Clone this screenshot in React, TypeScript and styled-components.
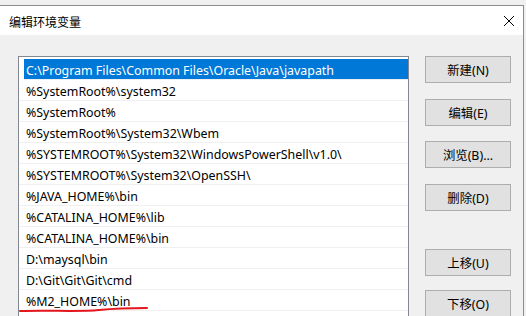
import React from "react";
import styled, { createGlobalStyle } from "styled-components";

const GlobalStyle = createGlobalStyle`
  html, body {
    margin: 0;
    padding: 0;
    background: #f0f0f0;
    overflow: hidden;
  }
  body {
    font-family: "Noto Sans", "Noto Sans CJK SC", sans-serif;
    font-size: 12.4px;
    color: #000;
  }
`;

const Window = styled.div`
  margin-top: 5px;
  margin-left: -1px;
  width: 523px;
  height: 320px;
  border: 1px solid #8c8c8c;
  background: #f0f0f0;
  display: flex;
  flex-direction: column;
`;

const TitleBar = styled.div`
  height: 29px;
  background: #fff;
  display: flex;
  align-items: center;
  justify-content: space-between;
  padding: 0 8px 0 9px;
  flex-shrink: 0;
`;

const Title = styled.span`
  font-family: "Noto Sans CJK SC", sans-serif;
  font-size: 12px;
  margin-top: 1px;
`;

const CloseIcon = styled.svg`
  width: 12px;
  height: 12px;
  margin-top: 1px;
`;

const Body = styled.div`
  display: flex;
  gap: 16px;
  padding: 21px 0 0 18px;
`;

const ListBox = styled.div`
  position: relative;
  width: 389px;
  height: 280px;
  border: 1px solid #828790;
  background: #fff;
  padding-top: 2px;
  flex-shrink: 0;
`;

const Row = styled.div<{ $selected?: boolean }>`
  box-sizing: border-box;
  height: 21px;
  padding-top: 2px;
  border-bottom: 1px solid #efefef;
  margin-left: ${(p) => (p.$selected ? "5px" : "0")};
  padding-left: ${(p) => (p.$selected ? "2px" : "7px")};
  background: ${(p) => (p.$selected ? "#0078d7" : "transparent")};
  color: ${(p) => (p.$selected ? "#fff" : "#000")};
  display: flex;
  align-items: center;
  white-space: nowrap;
`;

const Underline = styled.svg`
  position: absolute;
  left: 0;
  top: 247px;
  width: 140px;
  height: 10px;
  pointer-events: none;
`;

const ButtonColumn = styled.div`
  display: flex;
  flex-direction: column;
`;

const Button = styled.button<{ $gap: number }>`
  width: 86px;
  height: 27px;
  margin-top: ${(p) => p.$gap}px;
  border: 1px solid #adadad;
  background: #e1e1e1;
  font-family: "Noto Sans", "Noto Sans CJK SC", sans-serif;
  font-size: 12.4px;
  color: #000;
  padding: 1px 0 0;
  display: flex;
  align-items: center;
  justify-content: center;
`;

const paths = [
  "C:\\Program Files\\Common Files\\Oracle\\Java\\javapath",
  "%SystemRoot%\\system32",
  "%SystemRoot%",
  "%SystemRoot%\\System32\\Wbem",
  "%SYSTEMROOT%\\System32\\WindowsPowerShell\\v1.0\\",
  "%SYSTEMROOT%\\System32\\OpenSSH\\",
  "%JAVA_HOME%\\bin",
  "%CATALINA_HOME%\\lib",
  "%CATALINA_HOME%\\bin",
  "D:\\maysql\\bin",
  "D:\\Git\\Git\\Git\\cmd",
  "%M2_HOME%\\bin",
  "",
];

const buttons = [
  { label: "新建(N)", gap: 0 },
  { label: "编辑(E)", gap: 16 },
  { label: "浏览(B)...", gap: 15 },
  { label: "删除(D)", gap: 16 },
  { label: "上移(U)", gap: 38 },
  { label: "下移(O)", gap: 14 },
];

export default function App() {
  return (
    <>
      <GlobalStyle />
      <Window>
        <TitleBar>
          <Title>编辑环境变量</Title>
          <CloseIcon viewBox="0 0 12 12">
            <path d="M1 1 L11 11 M11 1 L1 11" stroke="#000" strokeWidth="1" />
          </CloseIcon>
        </TitleBar>
        <Body>
          <ListBox>
            {paths.map((p, i) => (
              <Row key={i} $selected={i === 0}>
                {p}
              </Row>
            ))}
            <Underline viewBox="0 0 140 10">
              <path
                d="M1 7 C 30 6, 60 8, 80 6 S 120 4, 128 4"
                fill="none"
                stroke="#e3161d"
                strokeWidth="2"
                strokeLinecap="round"
              />
            </Underline>
          </ListBox>
          <ButtonColumn>
            {buttons.map((b) => (
              <Button key={b.label} $gap={b.gap}>
                {b.label}
              </Button>
            ))}
          </ButtonColumn>
        </Body>
      </Window>
    </>
  );
}
